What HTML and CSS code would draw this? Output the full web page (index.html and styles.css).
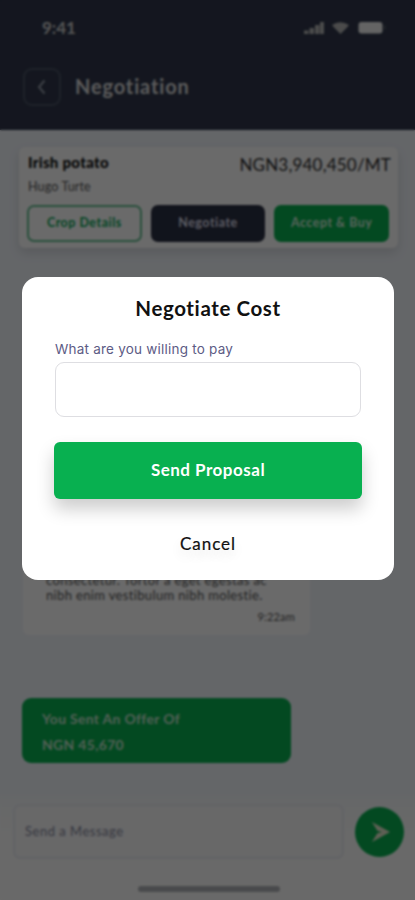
FILE: index.html
```html
<!DOCTYPE html>
<html lang="en">
<head>
<meta charset="utf-8">
<title>Negotiation</title>
<link rel="stylesheet" href="styles.css">
</head>
<body>
<div class="app">
  <header class="header">
    <div class="status">
      <span class="time">9:41</span>
      <svg class="status-icons" width="84" height="16" viewBox="0 0 84 16" fill="currentColor">
        <path d="M1 10.500h4.500V14H1zM6.500 8H11v6H6.500zM12 5h4.500v9H12zM17 2h4v12h-4z"/>
        <path d="M29 5Q37-.5 46 5l-2 2.500-6.500 6.500L31 7.500z"/>
        <rect class="battery" x="55.500" y="2" width="24" height="11.500" rx="3"/>
        <rect x="81" y="5.500" width="1.500" height="4" rx=".7" opacity=".3"/>
      </svg>
    </div>
    <div class="nav">
      <div class="back"><svg width="14" height="18" viewBox="0 0 14 18" fill="none" stroke="currentColor" stroke-width="2"><path d="M9.500 2.500 4 9l5.500 6.500"/></svg></div>
      <span class="nav-title">Negotiation</span>
    </div>
  </header>

  <main class="chat">
    <section class="offer">
      <div class="offer-top">
        <div>
          <div class="crop">Irish potato</div>
          <div class="seller">Hugo Turte</div>
        </div>
        <div class="price">NGN3,940,450/MT</div>
      </div>
      <div class="actions">
        <div class="action outline">Crop Details</div>
        <div class="action dark">Negotiate</div>
        <div class="action green">Accept &amp; Buy</div>
      </div>
    </section>
    <div class="message">
      <p class="line">consectetur. Tortor a eget egestas ac</p>
      <p class="line">nibh enim vestibulum nibh molestie.</p>
      <span class="stamp">9:22am</span>
    </div>
    <div class="sent">
      <div>You Sent An Offer Of</div>
      <div>NGN 45,670</div>
    </div>
  </main>

  <footer class="footer">
    <div class="composer">
      <div class="field"><span>Send a Message</span></div>
      <div class="send"><svg width="20" height="22" viewBox="0 0 22 24" fill="currentColor"><path d="M1 1 21 12 1 23l6-9.500L12 12 7 10.500z"/></svg></div>
    </div>
    <div class="home"></div>
  </footer>
</div>

<div class="overlay">
  <div class="modal">
    <h1 class="modal-title">Negotiate Cost</h1>
    <label class="label" for="cost">What are you willing to pay</label>
    <input class="input" id="cost" type="text">
    <button class="submit">Send Proposal</button>
    <button class="cancel">Cancel</button>
  </div>
</div>
</body>
</html>
```
FILE: styles.css
```css
* { box-sizing: border-box; }
body { margin: 0; font-family: Lato, "Liberation Sans", sans-serif; }
p, h1 { margin: 0; }
svg { display: block; }
.app { width: 415px; height: 900px; display: flex; flex-direction: column; overflow: hidden; background: #f1f5fb; white-space: nowrap; }

.header { height: 130px; flex: none; background: #30374b; padding: 19px 28px 0 23px; color: #ccc; }
.status { display: flex; justify-content: space-between; height: 18px; padding-left: 19px; }
.time { font-size: 17px; line-height: 18px; font-weight: 700; }
.status-icons { margin-top: 1px; color: #b4b4b4; }
.battery { fill: #f0f0f0; }
.nav { display: flex; align-items: center; gap: 14px; margin-top: 31px; }
.back { width: 38px; height: 38px; border: 2px solid #4a5164; border-radius: 9px; display: flex; align-items: center; justify-content: center; color: #949aa8; }
.nav-title { font-size: 20px; line-height: 24px; font-weight: 700; letter-spacing: .85px; color: #ddd; padding-bottom: 2px; }

.chat { flex: 1; padding: 17px 17px 0 19px; }
.offer { height: 101px; background: #fff; border-radius: 6px; padding: 5px 9px 0 8px; box-shadow: 0 5px 12px rgba(0,0,0,.12); }
.offer-top { display: flex; justify-content: space-between; height: 53px; padding: 0 0 0 1px; }
.crop { font-size: 15px; line-height: 20px; font-weight: 900; color: #111; letter-spacing: .3px; }
.seller { font-size: 12.500px; line-height: 18px; margin-top: 6px; color: #555; letter-spacing: .15px; }
.price { font-size: 17px; line-height: 25px; color: #2c2c2c; letter-spacing: .2px; margin-right: -2px; }
.actions { display: grid; grid-template-columns: repeat(3, 1fr); gap: 9px; }
.action { height: 37px; border-radius: 7px; display: flex; align-items: center; justify-content: center; padding-bottom: 2px; font-size: 12.500px; font-weight: 700; color: #dde; letter-spacing: .5px; }
.outline { border: 2px solid #65bf92; color: #08a656; }
.dark { background: #2b3043; }
.green { background: #08b050; color: #d4efdd; }
.message { width: 287px; height: 75px; margin: 312px 0 0 4px; background: #fff; border-radius: 0 0 6px 6px; padding: 13px 15px 0 23px; color: #555; }
.line { font-size: 13px; line-height: 14.500px; letter-spacing: .35px; }
.stamp { display: block; text-align: right; font-size: 11px; line-height: 14px; margin-top: 8px; letter-spacing: .2px; }
.sent { width: 269px; height: 65px; margin: 63px 0 0 3px; background: #08b050; border-radius: 9px; padding: 8px 20px; color: #c8e6d0; font-weight: 700; font-size: 14px; line-height: 25.500px; letter-spacing: .3px; }

.footer { height: 105px; flex: none; background: linear-gradient(#f4f7fb, #fdfdfc 40%); padding: 9px 11px 0 13px; }
.composer { display: flex; justify-content: space-between; align-items: center; }
.field { width: 331px; height: 55px; border: 2px solid #ebedf3; border-radius: 7px; background: #f9f9fb; padding: 0 0 2px 10px; display: flex; align-items: center; font-size: 13px; color: #85889a; letter-spacing: .5px; }
.send { width: 49px; height: 50px; border-radius: 50%; background: #08b050; color: #e4e6cc; display: flex; align-items: center; justify-content: center; padding-left: 3px; }
.home { width: 142px; height: 6px; border-radius: 3px; margin: 27px auto 0; background: #b0b3b8; }

.overlay { position: fixed; inset: 0; padding: 277px 21px 0 22px; background: rgba(0,0,0,.585); backdrop-filter: blur(1.200px); }
.modal { height: 303px; border-radius: 16px; background: #fff; display: flex; flex-direction: column; padding: 18px 33px 0; }
.modal-title { text-align: center; font-size: 20.500px; line-height: 26px; font-weight: 700; color: #111; letter-spacing: .6px; }
.label { font: 13.500px/18px Inter, "Liberation Sans", sans-serif; letter-spacing: .22px; color: #5d5b85; margin-top: 19px; }
.input { height: 55px; width: 306px; flex: none; margin-top: 4px; border: 1px solid #dedee2; border-radius: 9px; background: #fff; }
.submit, .cancel { border: 0; font-family: inherit; padding: 0; }
.submit { height: 57px; flex: none; margin: 25px -1px 0; border-radius: 6px; background: #08b050; color: #fff; font-size: 17px; font-weight: 700; letter-spacing: .5px; padding-bottom: 3px; box-shadow: 0 10px 18px rgba(0,0,0,.2); }
.cancel { align-self: center; margin-top: 32px; background: none; font-size: 17px; line-height: 26px; color: #111; letter-spacing: .95px; -webkit-text-stroke: .2px #111; text-shadow: 0 6px 12px rgba(0,0,0,.14); }
```
